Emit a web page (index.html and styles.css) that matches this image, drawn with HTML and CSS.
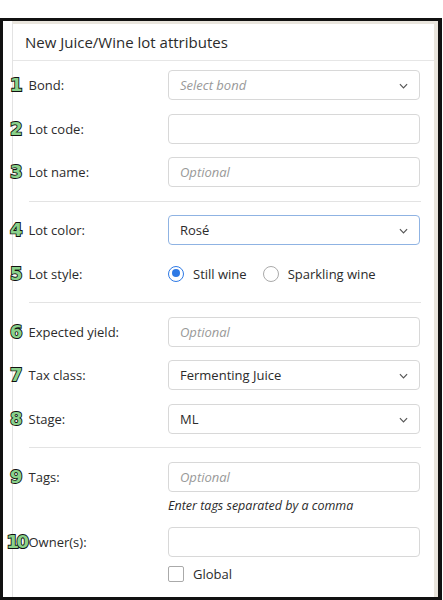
FILE: index.html
```html
<!DOCTYPE html>
<html>
<head>
<meta charset="utf-8">
<link rel="stylesheet" href="styles.css">
</head>
<body>
<div class="frame">
  <div class="panel">
    <div class="panel-header">New Juice/Wine lot attributes</div>
    <div class="form">
      <div class="row">
        <span class="num">1</span>
        <label class="label">Bond:</label>
        <div class="field select"><span class="ph">Select bond</span><svg class="chev" viewBox="0 0 10 6"><path d="M1 1l4 4 4-4"/></svg></div>
      </div>
      <div class="row">
        <span class="num">2</span>
        <label class="label">Lot code:</label>
        <div class="field"></div>
      </div>
      <div class="row">
        <span class="num">3</span>
        <label class="label">Lot name:</label>
        <div class="field"><span class="ph">Optional</span></div>
      </div>
      <div class="divider"></div>
      <div class="row">
        <span class="num">4</span>
        <label class="label">Lot color:</label>
        <div class="field select focus"><span class="val">Rosé</span><svg class="chev" viewBox="0 0 10 6"><path d="M1 1l4 4 4-4"/></svg></div>
      </div>
      <div class="row">
        <span class="num">5</span>
        <label class="label">Lot style:</label>
        <div class="radios">
          <span class="radio on"></span><span class="rlabel">Still wine</span>
          <span class="radio"></span><span class="rlabel">Sparkling wine</span>
        </div>
      </div>
      <div class="divider"></div>
      <div class="row">
        <span class="num">6</span>
        <label class="label">Expected yield:</label>
        <div class="field"><span class="ph">Optional</span></div>
      </div>
      <div class="row">
        <span class="num">7</span>
        <label class="label">Tax class:</label>
        <div class="field select"><span class="val">Fermenting Juice</span><svg class="chev" viewBox="0 0 10 6"><path d="M1 1l4 4 4-4"/></svg></div>
      </div>
      <div class="row">
        <span class="num">8</span>
        <label class="label">Stage:</label>
        <div class="field select"><span class="val">ML</span><svg class="chev" viewBox="0 0 10 6"><path d="M1 1l4 4 4-4"/></svg></div>
      </div>
      <div class="divider"></div>
      <div class="row top">
        <span class="num">9</span>
        <label class="label">Tags:</label>
        <div class="col">
          <div class="field"><span class="ph">Optional</span></div>
          <div class="help">Enter tags separated by a comma</div>
        </div>
      </div>
      <div class="row top">
        <span class="num n10">10</span>
        <label class="label">Owner(s):</label>
        <div class="col">
          <div class="field"></div>
          <div class="check"><span class="box"></span><span class="clabel">Global</span></div>
        </div>
      </div>
    </div>
  </div>
</div>
</body>
</html>
```
FILE: styles.css
```css
* { box-sizing: border-box; }
html, body { margin: 0; padding: 0; background: #fff; }
body {
  font-family: "Open Sans", "Noto Sans", sans-serif;
  color: #333;
  width: 443px;
  height: 600px;
  overflow: hidden;
}
.frame {
  margin-top: 18px;
  width: 442px;
  height: 582px;
  border: 3px solid #111;
  border-right-width: 4px;
  padding-left: 9px;
  overflow: hidden;
}
.panel {
  height: 100%;
  background: #fff;
  border-top: 3px solid #e9e5dd;
  border-left: 1.5px solid #e3e3e3;
  border-right: 4px solid #e9e5dd;
}
.panel-header {
  height: 37px;
  line-height: 36px;
  padding-left: 12px;
  font-size: 15px;
  font-weight: 500;
  color: #2b2b2b;
  border-bottom: 1px solid #e6e6e6;
}
.form {
  padding: 9px 13px 0 15.5px;
  display: flex;
  flex-direction: column;
  gap: 13.5px;
}
.divider {
  height: 1px;
  background: #e3e3e3;
  width: 392px;
}
.row {
  position: relative;
  display: flex;
  align-items: center;
}
.row.top { align-items: flex-start; }
.num {
  position: absolute;
  left: -18.5px;
  top: 5px;
  font-family: "DejaVu Sans", sans-serif;
  font-weight: bold;
  font-size: 18px;
  line-height: 19px;
  color: #8ad18a;
  -webkit-text-stroke: 1.8px #111;
  paint-order: stroke fill;
  letter-spacing: -2.5px;
}
.num.n10 { left: -22px; }
.label {
  width: 139.5px;
  flex: none;
  font-size: 13px;
  line-height: 30px;
  color: #2b2b2b;
}
.field {
  width: 252px;
  height: 30px;
  border: 1px solid #d8d8d8;
  border-radius: 4px;
  display: flex;
  align-items: center;
  padding: 0 11px;
  font-size: 13px;
  position: relative;
}
.field.focus { border-color: #8fb3e3; }
.ph { font-style: italic; color: #999; }
.val { color: #2b2b2b; }
.chev {
  position: absolute;
  right: 11px;
  top: 12px;
  width: 9px;
  height: 6px;
  fill: none;
  stroke: #555;
  stroke-width: 1.3;
}
.radios {
  height: 30px;
  display: flex;
  align-items: center;
  font-size: 13px;
  color: #2b2b2b;
}
.radio {
  width: 16px;
  height: 16px;
  border-radius: 50%;
  border: 1px solid #aaa;
  margin-right: 9px;
  position: relative;
}
.radio.on {
  border: 1.5px solid #2f7ae5;
  background: #fff;
}
.radio.on::after {
  content: "";
  position: absolute;
  left: 2.5px; top: 2.5px;
  width: 8px; height: 8px;
  border-radius: 50%;
  background: #2f7ae5;
}
.rlabel { margin-right: 16px; }
.col { display: flex; flex-direction: column; }
.help {
  margin-top: 5px;
  font-size: 12.5px;
  font-style: italic;
  line-height: 18px;
  color: #2b2b2b;
  margin-bottom: -1px;
}
.check {
  margin-top: 8px;
  display: flex;
  align-items: center;
  font-size: 13px;
  color: #2b2b2b;
}
.box {
  width: 16px; height: 16px;
  border: 1px solid #aaa;
  border-radius: 2px;
  margin-right: 9px;
}
```
